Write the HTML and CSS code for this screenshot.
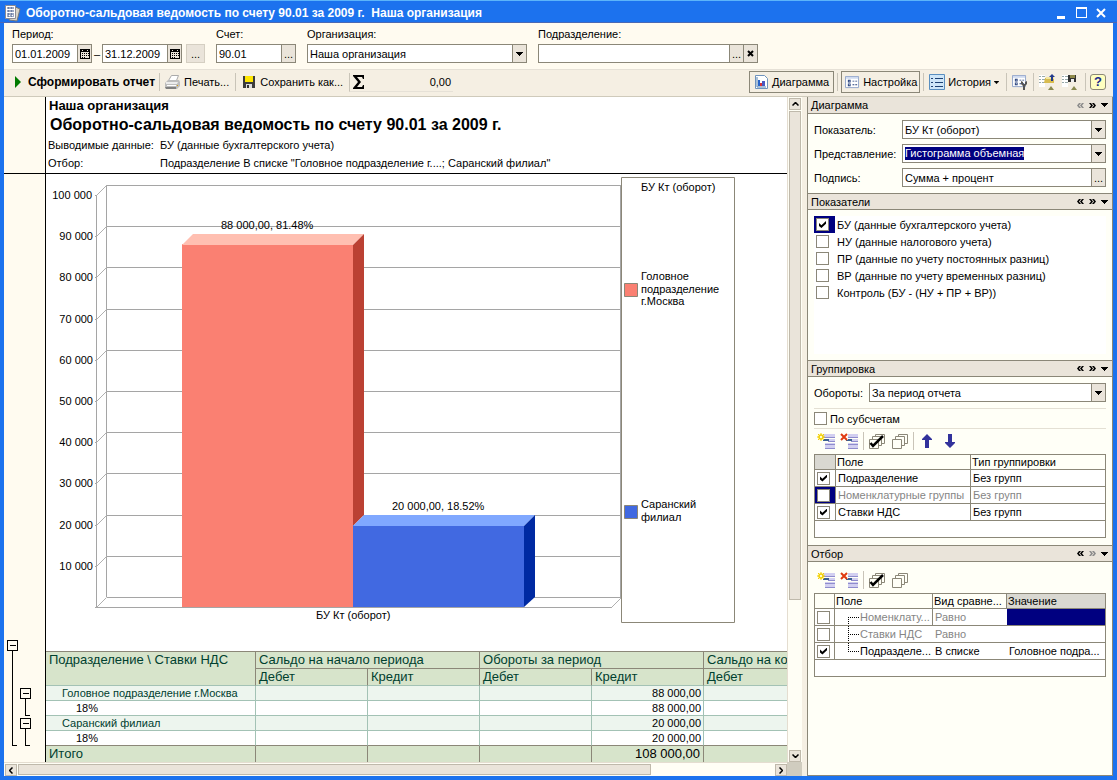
FILE: index.html
```html
<!DOCTYPE html>
<html lang="ru">
<head>
<meta charset="utf-8">
<title>Оборотно-сальдовая ведомость по счету 90.01 за 2009 г.</title>
<link rel="stylesheet" href="styles.css">
</head>
<body>
<svg class="defs" aria-hidden="true">
  <symbol id="cal" viewBox="0 0 10 10"><path d="M0 0h10v10H0z" fill="#000"/><path d="M1 3h8v6H1z" fill="#eae4da"/><path d="M2 1h1v1H2zM7 1h1v1H7z" fill="#eae4da"/><path d="M2 4h1v1H2zM4 4h1v1H4zM6 4h1v1H6zM2 6h1v1H2zM4 6h1v1H4zM6 6h1v1H6zM2 8h1v1H2zM4 8h1v1H4zM8 4h1v1H8zM8 6h1v1H8z" fill="#000"/></symbol>
  <symbol id="down" viewBox="0 0 7 4"><path d="M0 0h7v1H6v1H5v1H4v1H3V3H2V2H1V1H0z"/></symbol>
  <symbol id="left2" viewBox="0 0 7 5"><path d="M2 0h2L2 2.500L4 5H2L0 2.500zM5 0h2L5 2.500L7 5H5L3 2.500z"/></symbol>
  <symbol id="right2" viewBox="0 0 7 5"><path d="M0 0h2l2 2.500L2 5H0l2-2.500zM3 0h2l2 2.500L5 5H3l2-2.500z"/></symbol>
  <symbol id="bars" viewBox="0 0 18 18"><path d="M6 2h12v4H6zM11 7h7v3h-7zM8 11h10v5H8z" fill="#d2cff0"/><path d="M6 5h12v1H6zM11 9h7v1h-7zM8 12h10v1H8zM8 16h10v1H8z" fill="#8f8ccd"/><path d="M6 7h6v2H6z" fill="#3a6090"/></symbol>
  <symbol id="add" viewBox="0 0 18 18"><use href="#bars"/><path d="M4 1v2M4 7v2M0 5h2M6 5h2M1 2l1 1M7 2L6 3M1 8l1-1M7 8L6 7" stroke="#f3d000"/><circle cx="4" cy="5" r="2" fill="#fffbd0" stroke="#f3d000" stroke-width="1.500"/></symbol>
  <symbol id="del" viewBox="0 0 18 18"><use href="#bars"/><path d="M0 1h8v7H0z" fill="#fffff7"/><path d="M1 2l6 6M7 2L1 8" stroke="#e03a10" stroke-width="2"/></symbol>
  <symbol id="pages" viewBox="0 0 16 16"><path d="M6.500 1.500h9v9h-9z" fill="#fffff7" stroke="#8b8778"/><path d="M3.500 3.500h9v9h-9z" fill="#fffff7" stroke="#8b8778"/><path d="M.5 6.500h9v9h-9z" fill="#fffff7" stroke="#8b8778"/></symbol>
  <symbol id="checkall" viewBox="0 0 16 16"><use href="#pages"/><path d="M1.500 10l2.500 3 10-10" stroke="#000" stroke-width="2.500" fill="none"/></symbol>
  <symbol id="form" viewBox="0 0 16 14"><path d="M.5 .5h14v12H.5z" fill="#fff" stroke="#8fa2c8"/><path d="M1 1h13v2H1z" fill="#cfdaf0"/><path d="M3 4h3v3H3zM3 8h3v3H3z" fill="#26407c"/><path d="M4 5h1v1H4zM4 9h1v1H4z" fill="#fff"/><path d="M8 5h2v1H8zM11 5h2v1h-2zM8 9h2v1H8zM11 9h2v1h-2z" fill="#26407c"/></symbol>
</svg>

<header class="titlebar">
  <svg width="18" height="18" viewBox="0 0 18 18"><path d="M9 2l7 3-3 12-8-1z" fill="#d8d4c8" stroke="#777"/><path d="M1.500 1.500h10v13h-10z" fill="#fff" stroke="#8c8c94"/><path d="M3 4h7M3 7h7M3 10h7M3 12h7M5 3v10M8 3v10" stroke="#3d5488" stroke-dasharray="2 1" fill="none"/></svg>
  <h1>Оборотно-сальдовая ведомость по счету 90.01 за 2009 г.&nbsp; Наша организация</h1>
  <div class="window-buttons">
    <button aria-label="Свернуть"><svg width="12" height="12"><path d="M1 9h8v3H1z" fill="#fff"/></svg></button>
    <button aria-label="Развернуть"><svg width="12" height="12"><path d="M0 0h11v11H0zM1 2v8h9V2z" fill="#fff" fill-rule="evenodd"/></svg></button>
    <button aria-label="Закрыть"><svg width="12" height="12"><path d="M1 2l8 8M9 2l-8 8" stroke="#fff" stroke-width="2"/></svg></button>
  </div>
</header>

<div class="window">
<form class="params">
  <div class="param">
    <label for="from">Период:</label>
    <div class="period">
      <span class="field date"><input id="from" value="01.01.2009"><button type="button" aria-label="Календарь"><svg width="10" height="10"><use href="#cal"/></svg></button></span>
      <span class="dash">–</span>
      <span class="field date"><input aria-label="По" value="31.12.2009"><button type="button" aria-label="Календарь"><svg width="10" height="10"><use href="#cal"/></svg></button></span>
      <button type="button" class="more">...</button>
    </div>
  </div>
  <div class="param short"><label for="acc">Счет:</label><span class="field"><input id="acc" value="90.01"><button type="button">...</button></span></div>
  <div class="param long"><label for="org">Организация:</label><span class="field"><select id="org"><option>Наша организация</option></select><button type="button" aria-label="Открыть"><svg width="7" height="4"><use href="#down"/></svg></button></span></div>
  <div class="param long"><label for="dep">Подразделение:</label><span class="field"><input id="dep" value=""><button type="button">...</button><button type="button" aria-label="Очистить"><svg width="7" height="7"><path d="M1 1l5 5M6 1L1 6" stroke="#000" stroke-width="2"/></svg></button></span></div>
</form>

<div class="toolbar">
  <button class="tool run"><svg width="7" height="12"><path d="M0 0l6 6-6 6z" fill="#007a00"/></svg>Сформировать отчет</button>
  <i class="sep"></i>
  <button class="tool print"><svg width="17" height="16"><path d="M7.500 1.500h7l-2 5h-8z" fill="#fff" stroke="#aaa"/><path d="M1 9l3-3h11l1 2v4l-3 3H2l-1-2z" fill="#bdbdbd"/><path d="M2 8h12l-1 2H2z" fill="#ececec"/><path d="M1 13h11v2H2z" fill="#808080"/><path d="M3 11h9v1H3z" fill="#fff"/><path d="M13 11h1v1h-1z" fill="#e0a000"/></svg>Печать...</button>
  <i class="sep"></i>
  <button class="tool save"><svg width="12" height="12"><path d="M0 0h12v12H0z" fill="#3c3c3c"/><path d="M2 0h8v6H2z" fill="#ffe600"/><path d="M3 8h6v4H3z" fill="#ddd"/><path d="M4 9h2v3H4z" fill="#333"/></svg>Сохранить как...</button>
  <div class="sum"><svg width="12" height="14"><path d="M0 0h11v4h-1L9 2H4l4 5-4 5h5l1-2h1v4H0v-1l5-6-5-6z"/></svg><output>0,00</output></div>
  <div class="right-tools">
    <button class="tool pressed"><svg width="13" height="14"><path d="M.5 .5h9l3 3v10H.5z" fill="#fff" stroke="#6f93bd"/><path d="M2 2v10h9" stroke="#5580b0" fill="none"/><path d="M3 5h2v6H3z" fill="#2864c8"/><path d="M5 8h2v3H5z" fill="#d33"/><path d="M7 6h3v5H7z" fill="#4a58c0"/></svg>Диаграмма</button>
    <i class="sep"></i>
    <button class="tool pressed narrow"><svg width="15" height="13"><use href="#form" width="15" height="13"/></svg>Настройка</button>
    <i class="sep"></i>
    <button class="tool history"><svg width="16" height="16"><path d="M.5 .5h15v15H.5z" fill="#cfe6f8" stroke="#5a8fc0"/><path d="M2 4h2v1H2zM2 8h2v1H2zM2 12h2v1H2zM6 4h8v1H6zM6 8h8v1H6zM6 12h8v1H6z" fill="#1f4274"/></svg>История<svg width="5" height="3" viewBox="0 0 7 4"><use href="#down"/></svg></button>
    <i class="sep"></i>
    <button class="tool wide" aria-label="Настройка панели"><svg width="16" height="16"><use href="#form" width="15" height="13" y="1"/><path d="M9 7v3l2 2v4h2v-4l2-2V7l-2 1v2h-2V8z" fill="#555"/></svg></button>
    <i class="sep"></i>
    <button class="tool wide" aria-label="Восстановить"><svg width="16" height="17"><path d="M0 1h6v12H0z" fill="#fff"/><path d="M0 2.500h2M3 2.500h3M0 5.500h2M3 5.500h3M0 8.500h2M3 8.500h3" stroke="#9aa"/><path d="M6 4h9v5H5z" fill="#d8bc50"/><path d="M7 3h8v2H7z" fill="#f3e6a0"/><path d="M12 7V3h-2l3-3 3 3h-2v4z" fill="#233a8c"/><path d="M9 16l3-4 3 4z" fill="#8a8a50"/></svg></button>
    <button class="tool wide" aria-label="Сохранить настройки"><svg width="16" height="17"><path d="M0 1h6v12H0z" fill="#fff"/><path d="M0 2.500h2M3 2.500h3M0 5.500h2M3 5.500h3M0 8.500h2M3 8.500h3" stroke="#9aa"/><path d="M6 1h8v7H6z" fill="#333"/><path d="M8 1h5v3H8z" fill="#8f8a4a"/><path d="M9 5h3v3H9z" fill="#eee"/><path d="M9 16l3-4 3 4z" fill="#8a8a50"/></svg></button>
    <i class="sep"></i>
    <button class="help" aria-label="Справка">?</button>
  </div>
</div>

<main class="main">
  <section class="report">
    <div class="sheet">
      <div class="gutter gutter-top"></div>
      <div class="heading">
        <p class="org">Наша организация</p>
        <h2>Оборотно-сальдовая ведомость по счету 90.01 за 2009 г.</h2>
        <dl>
          <dt>Выводимые данные:</dt><dd>БУ (данные бухгалтерского учета)</dd>
          <dt>Отбор:</dt><dd>Подразделение В списке "Головное подразделение г....; Саранский филиал"</dd>
        </dl>
      </div>
      <div class="gutter">
        <svg class="outline" width="41" height="588" viewBox="4 174 41 588" fill="none" stroke="#000" shape-rendering="crispEdges"><path d="M7.500 640.500h10v10h-10zM10 645.500h6M12.500 651v94.500h4M20.500 688.500h10v10h-10zM23 693.500h6M25.500 699v16.500h4M20.500 718.500h10v10h-10zM23 723.500h6M25.500 729v16.500h4"/></svg>
      </div>
      <div class="content">
        <svg class="chart" width="741" height="477" viewBox="46 174 741 477">
          <g fill="none" stroke="#a5a5a5" shape-rendering="crispEdges">
            <path d="M106.500 185.500h514M106.500 226.500h514M106.500 267.500h514M106.500 309.500h514M106.500 350.500h514M106.500 391.500h514M106.500 432.500h514M106.500 473.500h514M106.500 515.500h514M106.500 556.500h514M106.500 597.500h514M106.500 185v412M620.500 185v412M96.500 195v412M96 607.500h516"/>
            <path d="M95 195.500h2M95 236.500h2M95 277.500h2M95 319.500h2M95 360.500h2M95 401.500h2M95 442.500h2M95 483.500h2M95 525.500h2M95 566.500h2M95 607.500h2"/>
          </g>
          <path fill="none" stroke="#b0b0b0" d="M96.500 195.500l10-10M96.500 236.500l10-10M96.500 277.500l10-10M96.500 319.500l10-10M96.500 360.500l10-10M96.500 401.500l10-10M96.500 442.500l10-10M96.500 483.500l10-10M96.500 525.500l10-10M96.500 566.500l10-10M96.500 607.500l10-10M611.500 607.500l10-10"/>
          <path fill="#fa8072" d="M182 244h171v363H182z"/><path fill="#ffbfb1" d="M182 245l11-11h171l-11 11z"/><path fill="#bb4133" d="M353 245l11-11v281l-11 11z"/>
          <path fill="#4169e1" d="M353 525h171v82H353z"/><path fill="#80a8ff" d="M353 526l11-11h171l-11 11z"/><path fill="#002aa2" d="M524 526l11-11v82l-11 10z"/>
          <g class="ticks"><text x="92" y="199">100 000</text><text x="93" y="240">90 000</text><text x="93" y="281">80 000</text><text x="93" y="323">70 000</text><text x="93" y="364">60 000</text><text x="93" y="405">50 000</text><text x="93" y="446">40 000</text><text x="93" y="487">30 000</text><text x="93" y="529">20 000</text><text x="93" y="570">10 000</text></g>
          <text x="221" y="229">88 000,00, 81.48%</text><text x="392" y="510">20 000,00, 18.52%</text><text x="316" y="619">БУ Кт (оборот)</text>
          <path d="M621.500 177.500h113v445h-113z" fill="#fff" stroke="#8b8778"/>
          <text x="641" y="191">БУ Кт (оборот)</text>
          <path d="M624.500 283.500h13v13h-13z" fill="#fa8072" stroke="#8b8778"/>
          <text x="641" y="280">Головное</text><text x="641" y="293">подразделение</text><text x="641" y="305">г.Москва</text>
          <path d="M624.500 505.500h13v13h-13z" fill="#4169e1" stroke="#8b8778"/>
          <text x="641" y="508">Саранский</text><text x="641" y="521">филиал</text>
        </svg>
        <table class="balance">
          <colgroup><col class="c-name"><col><col><col><col><col></colgroup>
          <thead>
            <tr><th rowspan="2">Подразделение \ Ставки НДС</th><th colspan="2">Сальдо на начало периода</th><th colspan="2">Обороты за период</th><th>Сальдо на ко</th></tr>
            <tr><th>Дебет</th><th>Кредит</th><th>Дебет</th><th>Кредит</th><th>Дебет</th></tr>
          </thead>
          <tbody>
            <tr class="group"><td>Головное подразделение г.Москва</td><td></td><td></td><td></td><td>88 000,00</td><td></td></tr>
            <tr class="detail"><td>18%</td><td></td><td></td><td></td><td>88 000,00</td><td></td></tr>
            <tr class="group"><td>Саранский филиал</td><td></td><td></td><td></td><td>20 000,00</td><td></td></tr>
            <tr class="detail"><td>18%</td><td></td><td></td><td></td><td>20 000,00</td><td></td></tr>
          </tbody>
          <tfoot><tr><td>Итого</td><td></td><td></td><td></td><td>108 000,00</td><td></td></tr></tfoot>
        </table>
      </div>
    </div>
    <div class="scroll vertical"><button aria-label="Вверх"><svg width="7" height="4"><path d="M.5 3.500l3-3 3 3" stroke="#000" stroke-width="1.500" fill="none"/></svg></button><div class="thumb"></div><div class="rest"></div><button aria-label="Вниз"><svg width="7" height="4"><path d="M.5 .5l3 3 3-3" stroke="#000" stroke-width="1.500" fill="none"/></svg></button></div>
    <div class="scroll horizontal"><button aria-label="Влево"><svg width="4" height="7"><path d="M3.500 .5l-3 3 3 3" stroke="#000" stroke-width="1.500" fill="none"/></svg></button><div class="thumb"></div><div class="rest"></div><button aria-label="Вправо"><svg width="4" height="7"><path d="M.5 .5l3 3-3 3" stroke="#000" stroke-width="1.500" fill="none"/></svg></button></div>
    <div class="corner"></div>
  </section>

  <aside class="side">
    <section>
      <header><h3>Диаграмма</h3><svg class="off" width="7" height="5"><use href="#left2"/></svg><svg width="7" height="5"><use href="#right2"/></svg><svg width="7" height="4"><use href="#down"/></svg></header>
      <div class="body settings">
        <label for="ind">Показатель:</label><span class="field"><select id="ind"><option>БУ Кт (оборот)</option></select><button aria-label="Открыть"><svg width="7" height="4"><use href="#down"/></svg></button></span>
        <label for="view">Представление:</label><span class="field"><select id="view" class="selected"><option>Гистограмма объемная</option></select><button aria-label="Открыть"><svg width="7" height="4"><use href="#down"/></svg></button></span>
        <label for="cap">Подпись:</label><span class="field"><input id="cap" value="Сумма + процент"><button>...</button></span>
      </div>
    </section>
    <section>
      <header><h3>Показатели</h3><svg width="7" height="5"><use href="#left2"/></svg><svg width="7" height="5"><use href="#right2"/></svg><svg width="7" height="4"><use href="#down"/></svg></header>
      <div class="body"><div class="list">
        <label><span class="mark current"><input type="checkbox" checked></span>БУ (данные бухгалтерского учета)</label>
        <label><span class="mark"><input type="checkbox"></span>НУ (данные налогового учета)</label>
        <label><span class="mark"><input type="checkbox"></span>ПР (данные по учету постоянных разниц)</label>
        <label><span class="mark"><input type="checkbox"></span>ВР (данные по учету временных разниц)</label>
        <label><span class="mark"><input type="checkbox"></span>Контроль (БУ - (НУ + ПР + ВР))</label>
      </div></div>
    </section>
    <section>
      <header><h3>Группировка</h3><svg width="7" height="5"><use href="#left2"/></svg><svg width="7" height="5"><use href="#right2"/></svg><svg width="7" height="4"><use href="#down"/></svg></header>
      <div class="body grouping">
        <div class="turnover"><label for="turn">Обороты:</label><span class="field"><select id="turn"><option>За период отчета</option></select><button aria-label="Открыть"><svg width="7" height="4"><use href="#down"/></svg></button></span></div>
        <label class="sub"><input type="checkbox">По субсчетам</label>
        <div class="icons">
          <button aria-label="Добавить"><svg width="18" height="18"><use href="#add"/></svg></button>
          <button aria-label="Удалить"><svg width="18" height="18"><use href="#del"/></svg></button>
          <i class="sep"></i>
          <button aria-label="Отметить все"><svg width="16" height="16"><use href="#checkall"/></svg></button>
          <button aria-label="Снять отметки"><svg width="16" height="16"><use href="#pages"/></svg></button>
          <i class="sep"></i>
          <button aria-label="Вверх"><svg width="16" height="16"><path d="M8 1l5 5v1h-3v8H6V7H3V6z" fill="#32329c"/></svg></button>
          <button aria-label="Вниз"><svg width="16" height="16"><path d="M8 15l5-5V9h-3V1H6v8H3v1z" fill="#32329c"/></svg></button>
        </div>
        <div class="gridbox"><table class="grid groups">
          <colgroup><col class="c-mark"><col class="c-field"><col></colgroup>
          <tr><th class="grey"></th><th>Поле</th><th>Тип группировки</th></tr>
          <tr><td><input type="checkbox" aria-label="Подразделение" checked></td><td>Подразделение</td><td>Без групп</td></tr>
          <tr class="muted"><td class="navy"><input type="checkbox" aria-label="Номенклатурные группы"></td><td>Номенклатурные группы</td><td>Без групп</td></tr>
          <tr><td><input type="checkbox" aria-label="Ставки НДС" checked></td><td>Ставки НДС</td><td>Без групп</td></tr>
        </table></div>
      </div>
    </section>
    <section class="filter">
      <header><h3>Отбор</h3><svg width="7" height="5"><use href="#left2"/></svg><svg class="off" width="7" height="5"><use href="#right2"/></svg><svg width="7" height="4"><use href="#down"/></svg></header>
      <div class="body">
        <div class="icons">
          <button aria-label="Добавить"><svg width="18" height="18"><use href="#add"/></svg></button>
          <button aria-label="Удалить"><svg width="18" height="18"><use href="#del"/></svg></button>
          <i class="sep"></i>
          <button aria-label="Отметить все"><svg width="16" height="16"><use href="#checkall"/></svg></button>
          <button aria-label="Снять отметки"><svg width="16" height="16"><use href="#pages"/></svg></button>
        </div>
        <div class="gridbox"><table class="grid filters">
          <colgroup><col class="c-mark"><col class="c-field"><col class="c-cmp"><col></colgroup>
          <tr><th></th><th>Поле</th><th>Вид сравне...</th><th class="grey">Значение</th></tr>
          <tr class="muted lined"><td><input type="checkbox" aria-label="Номенклатура"></td><td><div class="node"><svg width="12" height="16"><path d="M.5 8v8M0 8.500h12" stroke="#000" stroke-dasharray="1 1"/></svg>Номенклату...</div></td><td>Равно</td><td class="navy"></td></tr>
          <tr class="muted"><td><input type="checkbox" aria-label="Ставки НДС"></td><td><div class="node"><svg width="12" height="16"><path d="M.5 0v16M0 8.500h12" stroke="#000" stroke-dasharray="1 1"/></svg>Ставки НДС</div></td><td>Равно</td><td></td></tr>
          <tr><td><input type="checkbox" aria-label="Подразделение" checked></td><td><div class="node"><svg width="12" height="16"><path d="M.5 0v8M0 8.500h12" stroke="#000" stroke-dasharray="1 1"/></svg>Подразделе...</div></td><td>В списке</td><td>Головное подра...</td></tr>
        </table></div>
      </div>
    </section>
  </aside>
</main>
</div>
</body>
</html>
```
FILE: styles.css
```css
:root {
  --blue: #1c72ee;
  --line: #8b8778;
  --face: #eae4da;
  --bar: #f5efe3;
  --form: #fffbf0;
  --panel: #fffff7;
  --navy: #000080;
}

* { box-sizing: border-box; }

body {
  margin: 0;
  height: 100vh;
  display: flex;
  flex-direction: column;
  overflow: hidden;
  font: 11px/14px "Liberation Sans", Arial, sans-serif;
  color: #000;
  background: var(--blue);
}

h1, h2, h3, p, dl, dd { margin: 0; }
svg { display: block; flex: none; }
.defs { position: absolute; width: 0; height: 0; }

button, input, select { font: inherit; color: inherit; margin: 0; }
button { padding: 0; border: 0; background: none; display: flex; align-items: center; justify-content: center; white-space: nowrap; }

/* Window frame */
.titlebar {
  flex: none;
  height: 23px;
  display: flex;
  align-items: center;
  gap: 4px;
  padding: 2px 9px 0 4px;
  border-top: 1px solid #5cb4fa;
  border-bottom: 1px solid #4a68b4;
  background: var(--blue);
  color: #fff;
}
.titlebar h1 { flex: 1; font-size: 12px; line-height: 16px; font-weight: bold; }
.window-buttons { display: flex; gap: 8px; }
.window {
  flex: 1;
  min-height: 0;
  display: flex;
  flex-direction: column;
  margin: 0 4px 4px;
  background: var(--bar);
}

/* Report parameters */
.params {
  display: flex;
  gap: 11px;
  height: 46px;
  flex: none;
  padding: 4px 8px 0;
  background: var(--form);
}
.param { display: flex; flex-direction: column; gap: 3px; }
.param.short { width: 80px; }
.param.long { width: 220px; }
.period { display: flex; align-items: center; }
.period .date { width: 80px; }
.dash { width: 10px; text-align: center; }
.more { width: 19px; height: 19px; margin-left: 4px; background: var(--face); border: 1px solid #d5cfc2; }

.field {
  display: flex;
  height: 19px;
  min-width: 0;
  border: 1px solid var(--line);
  background: #fff;
}
.field input, .field select {
  flex: 1;
  min-width: 0;
  padding: 0 2px;
  border: 0;
  outline: 0;
  appearance: none;
  background: none;
}
.field button { flex: none; width: 14px; border-left: 1px solid var(--line); background: var(--face); }
.field select.selected {
  flex: none;
  field-sizing: content;
  margin: 2px auto 2px 2px;
  padding: 0;
  line-height: 13px;
  background: var(--navy);
  color: #fff;
}

/* Command bar */
.toolbar {
  flex: none;
  display: flex;
  align-items: center;
  height: 28px;
  padding: 0 7px 2px 11px;
  border-top: 1px solid #e6e1d7;
  border-bottom: 1px solid #cfcabb;
  background: var(--bar);
}
.sep { flex: none; width: 1px; height: 18px; background: #c9c4b8; }
.tool { gap: 2px; height: 22px; }
.run { gap: 6px; margin-right: 4px; font-weight: bold; font-size: 12px; }
.print { gap: 3px; margin: 0 6px 0 4px; }
.save { gap: 5px; margin: 0 6px 0 7px; }
.sum { display: flex; align-items: center; justify-content: space-between; width: 104px; height: 19px; padding: 0 2px 0 3px; border-left: 1px solid #c9c4b8; border-bottom: 1px solid #e6e1d7; }
.right-tools { display: flex; align-items: center; gap: 3px; margin-left: auto; }
.pressed { gap: 4px; padding: 0 4px 0 5px; border: 1px solid var(--line); }
.narrow { gap: 3px; padding: 0 2px 0 3px; }
.history { gap: 3px; margin: 0 4px 0 2px; }
.wide { margin: 0 2px; }
.wide + .wide { margin-right: 4px; }
.help { width: 16px; height: 16px; margin-left: 1px; border: 1px solid #8b8778; border-radius: 3px; background: #ffffc0; color: #1a2a8c; font-weight: bold; font-size: 13px; }

/* Work area */
.main { flex: 1; min-height: 0; display: flex; gap: 5px; }
.report {
  flex: 1;
  min-width: 0;
  display: grid;
  grid-template: minmax(0, 1fr) 14px / minmax(0, 1fr) 15px;
}
.sheet {
  display: grid;
  grid-template: auto 1fr / 42px minmax(0, 1fr);
  overflow: hidden;
  background: #fff;
}
.gutter { background: var(--form); border-right: 1px solid #000; }
.gutter-top, .heading { border-bottom: 1px solid #000; }
.heading { height: 77px; white-space: nowrap; }
.org { padding: 1px 0 0 3px; font-size: 13px; line-height: 16px; font-weight: bold; }
.heading h2 { padding-left: 4px; font-size: 16px; line-height: 22px; }
.heading dl { display: grid; grid-template-columns: 112px 1fr; padding-left: 2px; line-height: 18px; }
.content { min-width: 0; overflow: hidden; }
.chart text { font-size: 11px; }
.ticks { text-anchor: end; }

.balance { table-layout: fixed; width: 770px; border-spacing: 0; border-top: 1px solid var(--line); }
.balance col { width: 112px; }
.balance .c-name { width: 210px; }
.balance th, .balance td { height: 15px; padding: 0 2px; line-height: 14px; white-space: nowrap; overflow: hidden; border-right: 1px solid #a3c2b5; border-bottom: 1px solid #a3c2b5; }
.balance th { height: 17px; padding: 0 3px; font-size: 13px; line-height: 16px; font-weight: normal; text-align: left; vertical-align: top; color: #00402f; background: #d7e4cb; border-right-color: var(--line); }
.balance thead tr:first-child th[colspan], .balance thead tr:first-child th:last-child, .balance tbody tr:last-child td { border-bottom-color: var(--line); }
.balance td:nth-child(5) { text-align: right; }
.balance .group td { background: #edf5ee; }
.balance .group td:first-child { padding-left: 16px; color: #00402f; }
.balance .detail td:first-child { padding-left: 30px; }
.balance tfoot td { height: 17px; padding: 0 3px; font-size: 13px; line-height: 16px; background: #d7e4cb; border-right-color: var(--line); }
.balance tfoot td:first-child { color: #00402f; }

.scroll { display: flex; gap: 1px; background: #fffef5; border: 0 solid #e4ddd0; }
.scroll button { flex: none; width: 12px; height: 12px; border: 1px solid #bfb9ab; background: var(--face); }
.scroll .thumb { background: var(--face); border: 1px solid #bfb9ab; }
.vertical { flex-direction: column; padding: 1px 1px 0 1px; border-left-width: 1px; }
.vertical .thumb { flex: 490; }
.vertical .rest { flex: 149; }
.horizontal { padding: 1px 0 1px 1px; border-top-width: 1px; }
.horizontal .thumb { flex: 634; }
.horizontal .rest { flex: 123; }
.corner { background: #d0ccbf; }

/* Settings panel */
.side { flex: none; width: 306px; display: flex; flex-direction: column; border: 1px solid var(--line); border-top: 0; background: var(--panel); }
.side header { display: flex; align-items: center; gap: 5px; height: 17px; padding: 0 4px 0 3px; border: 1px solid var(--line); border-width: 1px 0; background: var(--face); }
.side section:first-child header { border-top: 0; }
.side h3 { flex: 1; font-size: 11px; font-weight: normal; line-height: 14px; }
.off { fill: #8b8b8b; }
.side .body { padding: 6px; }
.side .grouping { padding-bottom: 5px; }
.filter { flex: 1; }

.settings { display: grid; grid-template-columns: 83px 1fr; gap: 5px; align-items: center; height: 79px; align-content: start; white-space: nowrap; }

input[type="checkbox"] { appearance: none; flex: none; display: block; position: relative; width: 13px; height: 13px; margin: 0; border: 1px solid var(--line); background: #fff; }
input[type="checkbox"]:checked::before { content: ""; position: absolute; inset: 2px; background: #000; clip-path: polygon(0 30%, 35% 60%, 100% 0, 100% 38%, 35% 100%, 0 70%); }

.list { height: 138px; background: #fff; }
.list label { display: flex; align-items: center; gap: 2px; height: 17px; }
.mark { display: flex; align-items: center; width: 21px; height: 17px; padding-left: 2px; }
.mark.current, .navy { background: var(--navy); }

.turnover { display: grid; grid-template-columns: 51px 1fr; gap: 4px; align-items: center; padding-bottom: 6px; border-bottom: 1px solid #e4e0d4; }
.sub { display: flex; align-items: center; gap: 3px; height: 20px; border-bottom: 1px solid #e4e0d4; }
.icons { display: flex; align-items: center; gap: 5px; height: 25px; padding: 0 0 1px 3px; }
.icons .sep ~ button + button { margin-left: 2px; }

.gridbox { border: 1px solid var(--line); background: #fff; padding-bottom: 16px; }
.grid { width: 100%; table-layout: fixed; border-spacing: 0; }
.grid .c-mark { width: 21px; }
.groups .c-field { width: 135px; }
.filters .c-mark { width: 20px; }
.filters .c-field { width: 98px; }
.filters .c-cmp { width: 74px; }
.grid th, .grid td { height: 17px; padding: 0 2px; font-weight: normal; text-align: left; line-height: 14px; white-space: nowrap; overflow: hidden; border-bottom: 1px solid var(--line); }
.grid th { height: 15px; padding: 0 1px; background: var(--panel); }
.side .grouping { padding-bottom: 7px; }
.grid th:not(:last-child), .groups td:not(:last-child), .grid td:first-child, .lined td:nth-child(2) { border-right: 1px solid var(--line); }
.grid th.grey { background: #d9d8d1; }
.grid td.navy { background: var(--navy); }
.muted { color: #858585; }
.grid .node { display: flex; align-items: center; padding-left: 11px; }
```
